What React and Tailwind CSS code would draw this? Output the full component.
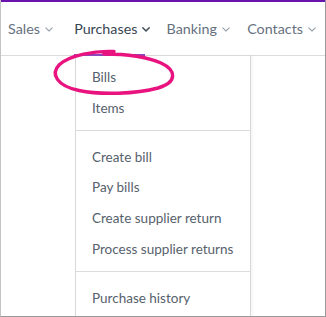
import React from "react";

const Chevron = ({ dark }) => (
  <svg width="8" height="5" viewBox="0 0 8 5" className="ml-[5px] mt-[2px]" fill="none">
    <path d="M0.8 0.8 L4 4 L7.2 0.8" stroke={dark ? "#3f4b57" : "#9aa2ab"} strokeWidth={dark ? 1.5 : 1.1} strokeLinecap="round" strokeLinejoin="round" />
  </svg>
);

const NavItem = ({ label, w, active }) => (
  <div className={`relative flex h-full items-center ${w}`}>
    <span className={active ? "text-[#3a4653]" : "text-[#667180]"}>{label}</span>
    <Chevron dark={active} />
    {active && <div className="absolute bottom-[-1px] left-0 h-[2px] w-[71px] bg-[#8a48bc]" />}
  </div>
);

const Row = ({ children }) => (
  <div className="flex h-[30.6px] items-center pl-[16px] text-[#56616c]">{children}</div>
);

export default function App() {
  return (
    <div
      className="relative h-[317px] w-[326px] overflow-hidden border-b border-l border-r border-b-[#9a9a9a] border-l-[#c4c4c4] border-r-[#9a9a9a] bg-white"
      style={{ fontFamily: "Lato, 'Open Sans', sans-serif" }}
    >
      <div className="h-[2px] w-full bg-[#6a12ad]" />
      <nav className="flex h-[54px] items-center border-b border-[#dcdcdc] pl-[7px] text-[14.3px]">
        <NavItem label="Sales" w="w-[68px]" />
        <NavItem label="Purchases" w="w-[95px]" active />
        <NavItem label="Banking" w="w-[83px]" />
        <NavItem label="Contacts" w="w-[80px]" />
      </nav>
      <div className="ml-[74px] h-[260px] w-[176px] border-l border-r border-[#d6d9dc] text-[13.5px] shadow-[2px_0_3px_rgba(0,0,0,0.04)]">
        <div className="border-b border-[#dcdcdc] pb-[7px] pt-[6px]">
          <Row>Bills</Row>
          <Row>Items</Row>
        </div>
        <div className="border-b border-[#dcdcdc] pb-[7px] pt-[10.5px]">
          <Row>Create bill</Row>
          <Row>Pay bills</Row>
          <Row>Create supplier return</Row>
          <Row>Process supplier returns</Row>
        </div>
        <div className="pt-[10.5px]">
          <Row>Purchase history</Row>
        </div>
      </div>
      <svg className="pointer-events-none absolute left-[-1px] top-0" width="326" height="317" viewBox="0 0 326 317" fill="none">
        <path
          d="M114 51.5 C95 50.5 70 55 59.5 64.5 C50 74 57 86 79 90.5 C100 95 136 94 158 88 C178 82 176 70 161 63 C146 56.5 126 54 104 54"
          stroke="#e8137f"
          strokeWidth="3.4"
          strokeLinecap="round"
        />
      </svg>
    </div>
  );
}
